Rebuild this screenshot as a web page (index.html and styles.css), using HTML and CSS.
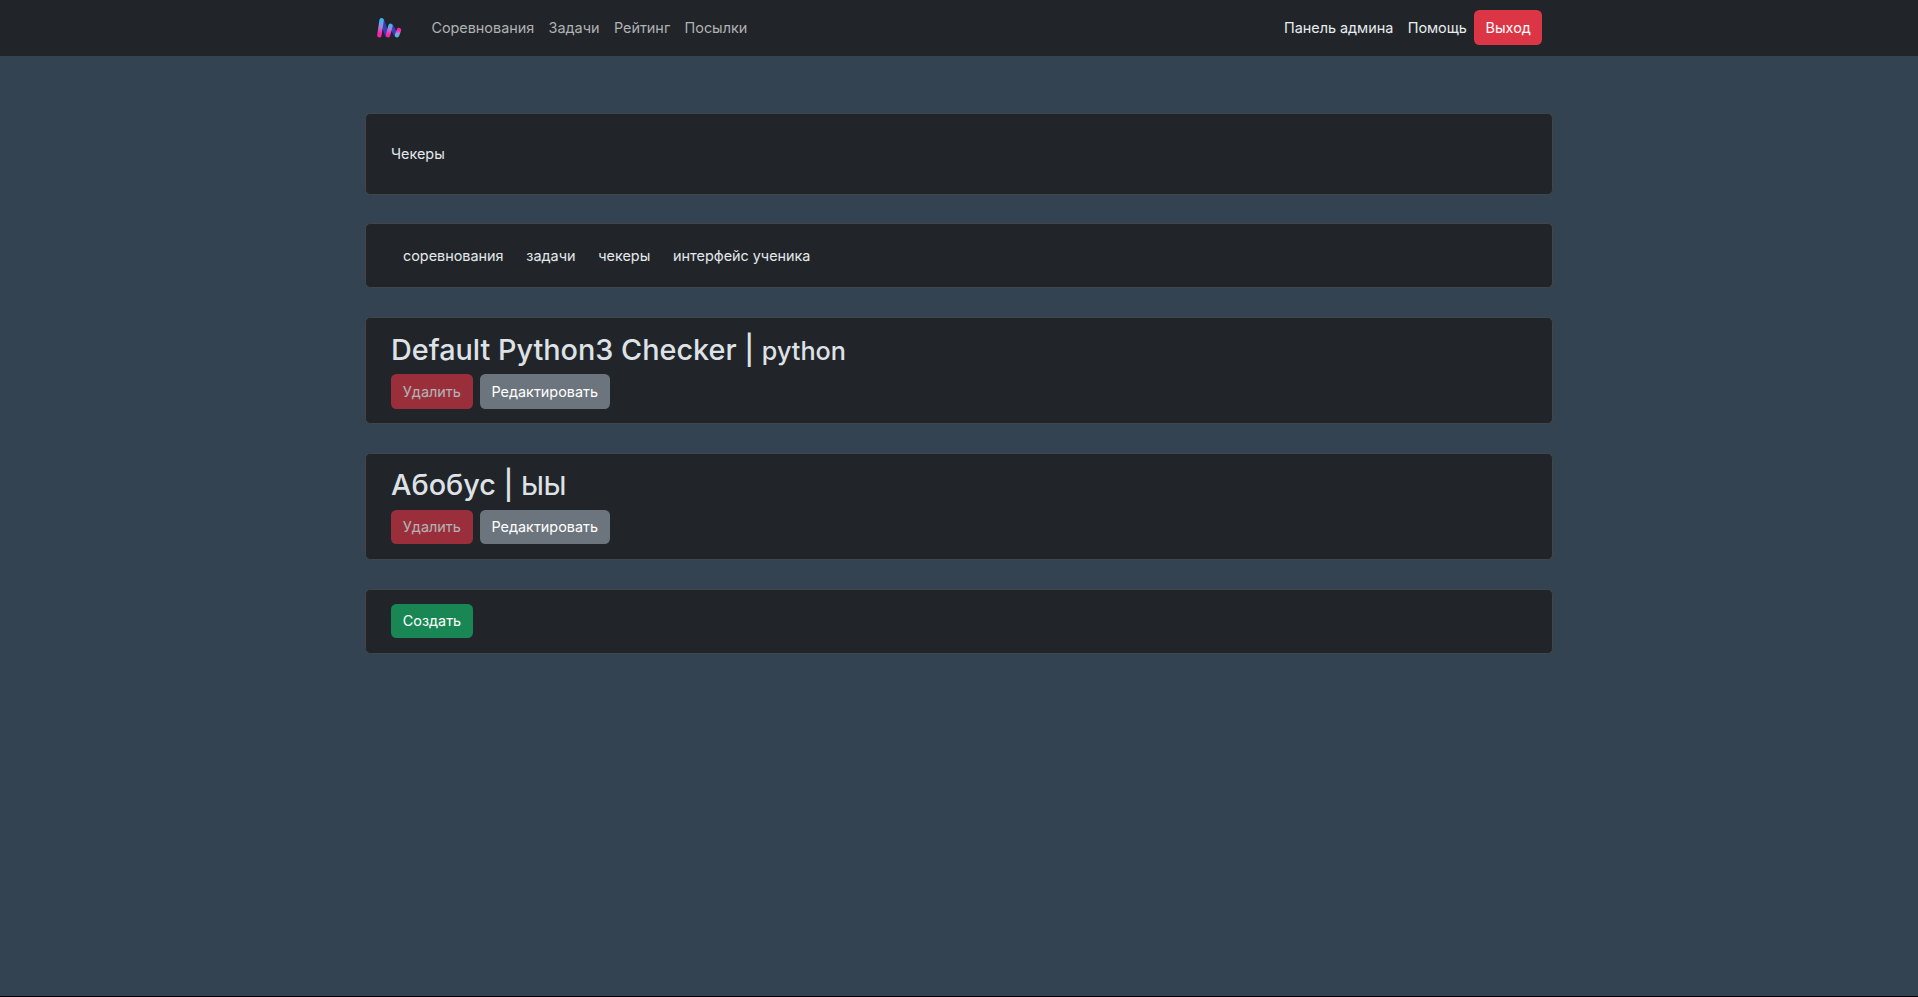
FILE: index.html
```html
<!DOCTYPE html>
<html lang="ru">
<head>
<meta charset="utf-8">
<title>Чекеры</title>
<link rel="stylesheet" href="styles.css">
</head>
<body>
<nav class="navbar">
  <div class="container nav-inner">
    <a class="brand" href="#"><svg width="25" height="22" viewBox="0 0 25 22" fill="none" stroke-linecap="round">
      <defs>
        <linearGradient id="bar" gradientUnits="userSpaceOnUse" x1="0" y1="1" x2="0" y2="20"><stop offset="0.1" stop-color="#38b8f0"/><stop offset=".5" stop-color="#b080d8"/><stop offset=".8" stop-color="#ff20b0"/></linearGradient>
        <linearGradient id="bar-mid" gradientUnits="userSpaceOnUse" x1="0" y1="6" x2="0" y2="20"><stop offset="0.1" stop-color="#38b8f0"/><stop offset=".45" stop-color="#b080d8"/><stop offset=".8" stop-color="#ff20b0"/></linearGradient>
        <linearGradient id="tail" gradientUnits="userSpaceOnUse" x1="0" y1="11" x2="0" y2="20"><stop offset="0.25" stop-color="#ff20b0"/><stop offset=".6" stop-color="#a090e0"/><stop offset=".9" stop-color="#48b8f0"/></linearGradient>
      </defs>
      <path d="M5.2 4 10 17.5" stroke="#3340b8" stroke-width="4.4"/>
      <path d="M14 9 19 17.5" stroke="#3340b8" stroke-width="4.4"/>
      <path d="M2.4 18.2 4.6 3.2" stroke="url(#bar)" stroke-width="4.4"/>
      <path d="M11 18.2 13.5 8.8" stroke="url(#bar-mid)" stroke-width="4.4"/>
      <path d="M20 18.2 22 13" stroke="url(#tail)" stroke-width="4.4"/>
    </svg></a>
    <div class="links main-links"><a href="#">Соревнования</a><a href="#">Задачи</a><a href="#">Рейтинг</a><a href="#">Посылки</a></div>
    <div class="links user-links"><a href="#">Панель админа</a><a href="#">Помощь</a><button class="btn danger">Выход</button></div>
  </div>
</nav>
<main class="container">
  <section class="card title-card"><p>Чекеры</p></section>
  <section class="card tabs"><a href="#">соревнования</a><a href="#">задачи</a><a href="#">чекеры</a><a href="#">интерфейс ученика</a></section>
  <section class="card checker">
    <h2>Default Python3 Checker | <small>python</small></h2>
    <div class="actions"><button class="btn danger" disabled>Удалить</button><button class="btn secondary">Редактировать</button></div>
  </section>
  <section class="card checker">
    <h2>Абобус | <small>ЫЫ</small></h2>
    <div class="actions"><button class="btn danger" disabled>Удалить</button><button class="btn secondary">Редактировать</button></div>
  </section>
  <section class="card create"><div class="actions"><button class="btn success">Создать</button></div></section>
</main>
</body>
</html>
```

FILE: styles.css
```css
* { box-sizing: border-box; }
body {
  margin: 0;
  min-height: 997px;
  background: #344352;
  border-bottom: 1px solid #000;
  color: #e4e8eb;
  font: 400 14.4px/21.6px Inter, sans-serif;
}
a { color: inherit; text-decoration: none; }
.container { width: 1188px; margin: 0 auto; }
.navbar { height: 56px; background: #212529; }
.nav-inner { display: flex; align-items: center; height: 56px; padding: 0 11px 0 12px; }
.brand { display: flex; margin-right: 29.4px; }
.links { display: flex; align-items: center; }
.main-links { gap: 14.4px; color: #b0b1b3; }
.user-links { gap: 14.4px; margin-left: auto; color: #e8ecef; }
.user-links .btn { height: 35px; margin-top: -1px; margin-left: -6.8px; padding: 0 11.2px; }
.btn {
  height: 34.4px;
  padding: 0 11.8px;
  border: 0;
  border-radius: 5.4px;
  color: #fff;
  font: 400 14.4px/21.6px Inter, sans-serif;
}
.danger { background: #dc3545; }
.danger:disabled { opacity: .65; }
.secondary { background: #6c757d; }
.success { background: #198754; }
.card {
  margin-top: 29px;
  padding: 13.5px 25px;
  background: #212529;
  border: 1px solid #424549;
  border-radius: 5.4px;
}
.title-card { height: 82px; margin-top: 57px; padding-top: 29px; }
.title-card p { margin: 0; }
.tabs { display: flex; gap: 22.8px; height: 65px; margin-top: 28px; padding: 21px 37px; }
.checker { height: 107px; padding-top: 14px; }
.checker + .checker { padding-top: 13px; }
.create { height: 65px; }
h2 { margin: 0 0 5px; color: #dee2e6; font-size: 28.8px; line-height: 36px; font-weight: 500; }
.checker + .checker h2 { margin-bottom: 8px; line-height: 35px; }
.checker .btn { height: 35px; }
.checker + .checker .btn { height: 34px; }
.checker + .checker .actions { margin-top: -2px; }
small { font-size: 25.2px; }
.actions { display: flex; gap: 7.2px; }
```
